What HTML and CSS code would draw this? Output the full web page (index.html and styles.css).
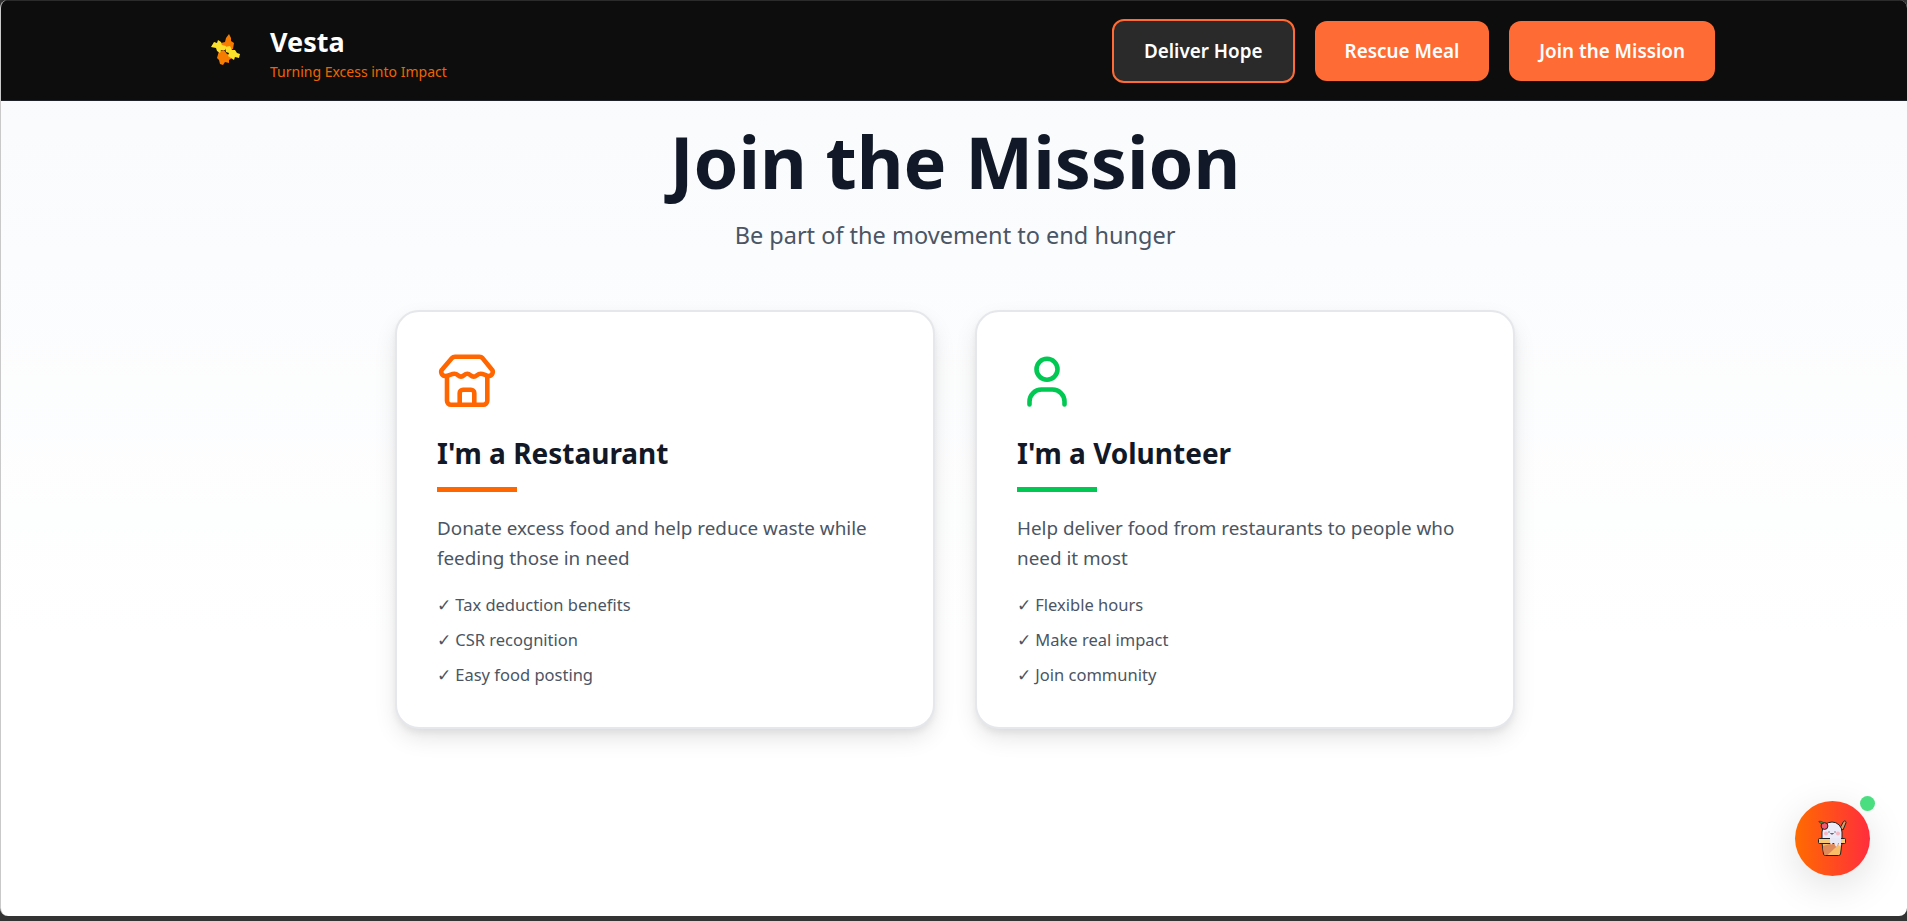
FILE: index.html
```html
<!DOCTYPE html>
<html lang="en">
<head>
  <meta charset="UTF-8" />
  <meta name="viewport" content="width=device-width, initial-scale=1.0"/>
  <title>Vesta - Join the Mission</title>
  <link rel="stylesheet" href="styles.css">
</head>
<body>
  <div class="window">
    <header class="navbar">
      <a class="brand" href="#">
        <svg class="brand-logo" viewBox="0 0 30 31" aria-hidden="true">
          <polygon fill="#f57c00" points="18,0 20,4 20,7 23,9 22,15 17,16 11,14 10,9 14,8 15,4"/>
          <polygon fill="#f57c00" points="8,17 13,16 16,20 20,21 21,24 18,26 18,29 14,28 12,31 9,30 8,26 6,24"/>
          <polygon fill="#fbe02b" points="3,8 6,9 7,6 10,8 11,11 15,12 14,16 10,16 9,19 6,17 5,14 0,13"/>
          <polygon fill="#fbe02b" points="14,13 19,12 21,16 24,16 26,19 29,20 28,24 24,23 23,26 20,24 17,22 18,19 15,18"/>
        </svg>
        <span class="brand-text">
          <span class="brand-name">Vesta</span>
          <span class="brand-tag">Turning Excess into Impact</span>
        </span>
      </a>
      <nav class="nav-buttons">
        <a class="nav-btn active" href="#">Deliver Hope</a>
        <a class="nav-btn" href="#">Rescue Meal</a>
        <a class="nav-btn" href="#">Join the Mission</a>
      </nav>
    </header>

    <main class="content">
      <h1>Join the Mission</h1>
      <p class="subtitle">Be part of the movement to end hunger</p>

      <div class="cards">
        <section class="card">
          <svg class="card-icon store" viewBox="0 0 60 60" aria-hidden="true">
            <path d="M18 7.700H42.500a4 4 0 0 1 3 1.400L54.400 20a4 4 0 0 1-2.400 7C49 27 47 24.800 43.500 24.800C40 24.800 40 27.600 36.700 27.600C33.500 27.600 33.500 24.800 30.300 24.800C27 24.800 27 27.600 24 27.600C21 27.600 21 24.800 17.500 24.800C14 24.800 12 27 8 27a4 4 0 0 1-2.400-7L15 9.100a4 4 0 0 1 3-1.400z"/>
            <path d="M10 28v23.700a4 4 0 0 0 4 4h32.300a4 4 0 0 0 4-4V28"/>
            <path d="M22.700 55.700V44a3.300 3.300 0 0 1 3.300-3.300h8a3.300 3.300 0 0 1 3.300 3.300v11.700"/>
          </svg>
          <h2>I'm a Restaurant</h2>
          <div class="rule"></div>
          <p class="card-text">Donate excess food and help reduce waste while feeding those in need</p>
          <ul class="perks">
            <li>✓ Tax deduction benefits</li>
            <li>✓ CSR recognition</li>
            <li>✓ Easy food posting</li>
          </ul>
        </section>

        <section class="card green">
          <svg class="card-icon person" viewBox="0 0 60 60" aria-hidden="true">
            <circle cx="30" cy="20.300" r="10.500"/>
            <path d="M12.500 55.500v-3a12 12 0 0 1 12-12h11a12 12 0 0 1 12 12v3"/>
          </svg>
          <h2>I'm a Volunteer</h2>
          <div class="rule"></div>
          <p class="card-text">Help deliver food from restaurants to people who need it most</p>
          <ul class="perks">
            <li>✓ Flexible hours</li>
            <li>✓ Make real impact</li>
            <li>✓ Join community</li>
          </ul>
        </section>
      </div>
    </main>

    <button class="chat-bubble" type="button" aria-label="Open chat">
      <svg class="chat-icon" viewBox="0 0 30 37" aria-hidden="true">
        <path d="M22 9l3.500-6.500c.8-1.200 3-.3 2.500 1.200L25 11z" fill="#dd9a63" stroke="#222" stroke-width="1"/>
        <path d="M4 21v-8a10 10 0 0 1 20 0v8z" fill="#ecebfa" stroke="#222" stroke-width="1"/>
        <circle cx="6.500" cy="7" r="3.400" fill="#ef5a6f" stroke="#222" stroke-width="1"/>
        <path d="M5.500 4C4 2.200 2.500 2 .8 2.500 2 4.500 3.800 4.800 5.500 4z" fill="#3fa34d" stroke="#222" stroke-width=".6"/>
        <circle cx="8" cy="14.500" r="2" fill="#f7b6c2"/>
        <circle cx="20" cy="14.500" r="2" fill="#f7b6c2"/>
        <path d="M11 12.500v1M17 12.500v1M12.500 14.500q1.500 1 3 0" fill="none" stroke="#222" stroke-width="1"/>
        <path d="M4 24L5.500 35a2 2 0 0 0 2 1.500h13a2 2 0 0 0 2-1.500L24 24z" fill="#f9bd68" stroke="#222" stroke-width="1"/>
        <path d="M4.800 27L14 24.500H22L9.500 36H7.500a2 2 0 0 1-1.500-1.500z" fill="#e08a5c"/>
        <path d="M1.500 19.500h25a1 1 0 0 1 1 1v3a1 1 0 0 1-1 1h-25a1 1 0 0 1-1-1v-3a1 1 0 0 1 1-1z" fill="#f9c877" stroke="#222" stroke-width="1"/>
        <path d="M12 19h11v6.500c0 1.800-2.500 1.800-2.500 0V24c-.8 0-.8 4-2.300 3.500S17 24 15.500 24 14 26 13 25.500 12 23 12 22z" fill="#e8e7f5"/>
      </svg>
      <span class="online-dot"></span>
    </button>
  </div>
</body>
</html>
```

FILE: styles.css
```css
* { box-sizing: border-box; margin: 0; padding: 0; }

html, body {
  height: 100%;
  overflow: hidden;
  background: #333;
  font-family: "Noto Sans", "Open Sans", sans-serif;
}

a { text-decoration: none; color: inherit; }

.window {
  position: relative;
  display: flex;
  flex-direction: column;
  height: 916px;
  overflow: hidden;
  border-left: 1px solid #c9c9c9;
  border-radius: 8px;
  background: linear-gradient(180deg, #f8fafc 0%, #ffffff 70%);
}

/* top bar */
.navbar {
  flex: none;
  display: flex;
  align-items: center;
  justify-content: space-between;
  height: 101px;
  padding: 0 192px 0 210px;
  background: #0d0d0d;
  border-top: 1px solid #2b2b2b;
  border-bottom: 1px solid #1e2329;
}

.brand {
  display: flex;
  align-items: center;
  gap: 29px;
}

.brand-logo {
  width: 30px;
  height: 31px;
  margin-bottom: 2px;
}

.brand-text {
  display: flex;
  flex-direction: column;
  padding-top: 5px;
}

.brand-name {
  font-size: 27px;
  line-height: 34px;
  font-weight: 700;
  color: #fff;
}

.brand-tag {
  margin-top: 3px;
  font-size: 14px;
  line-height: 20px;
  color: #f06400;
}

.nav-buttons {
  display: flex;
  align-items: center;
  gap: 20px;
}

.nav-btn {
  padding: 18px 30px;
  font-size: 18.850px;
  line-height: 24px;
  font-weight: 600;
  color: #fff;
  background: #ff6b35;
  border-radius: 12px;
}

.nav-btn.active {
  background: #2a2a2a;
  border: 2px solid #ff6b35;
}

/* page body */
.content {
  flex: 1;
  padding: 15px 0 0 2px;
  text-align: center;
}

h1 {
  font-size: 72px;
  line-height: 90px;
  font-weight: 700;
  color: #111827;
}

.subtitle {
  margin-top: 13px;
  font-size: 23.500px;
  line-height: 32px;
  color: #4b5563;
}

.cards {
  display: grid;
  grid-template-columns: 540px 540px;
  justify-content: center;
  gap: 40px;
  margin-top: 59px;
  text-align: left;
}

.card {
  --accent: #ff6600;
  height: 419px;
  padding: 37px 40px 40px;
  background: #fff;
  border: 2px solid #e5e7eb;
  border-radius: 24px;
  box-shadow: 0 10px 25px -3px rgba(0, 0, 0, 0.12), 0 4px 6px rgba(0, 0, 0, 0.05);
}

.card.green { --accent: #00c853; }

.card-icon {
  display: block;
  width: 60px;
  height: 60px;
  fill: none;
  stroke: var(--accent);
  stroke-width: 4.600;
  stroke-linecap: round;
  stroke-linejoin: round;
}

.card h2 {
  margin-top: 24px;
  font-size: 28px;
  line-height: 40px;
  font-weight: 700;
  color: #111827;
}

.rule {
  width: 80px;
  height: 5px;
  margin-top: 14px;
  background: var(--accent);
}

.card-text {
  margin-top: 21px;
  font-size: 18.850px;
  line-height: 30px;
  color: #4b5563;
}

.perks {
  margin-top: 14px;
  list-style: none;
  font-size: 16.500px;
  line-height: 35px;
  color: #4b5563;
}

/* floating chat button */
.chat-bubble {
  position: absolute;
  left: 1794px;
  top: 801px;
  width: 75px;
  height: 75px;
  border: none;
  border-radius: 50%;
  background: linear-gradient(90deg, #ff6b00, #ff2d3d);
  box-shadow: 0 10px 40px rgba(0, 0, 0, 0.12);
}

.chat-icon {
  position: absolute;
  left: 23px;
  top: 18px;
  width: 30px;
  height: 37px;
}

.online-dot {
  position: absolute;
  right: -5px;
  top: -5px;
  width: 15px;
  height: 15px;
  border-radius: 50%;
  background: #4ade80;
}
```
